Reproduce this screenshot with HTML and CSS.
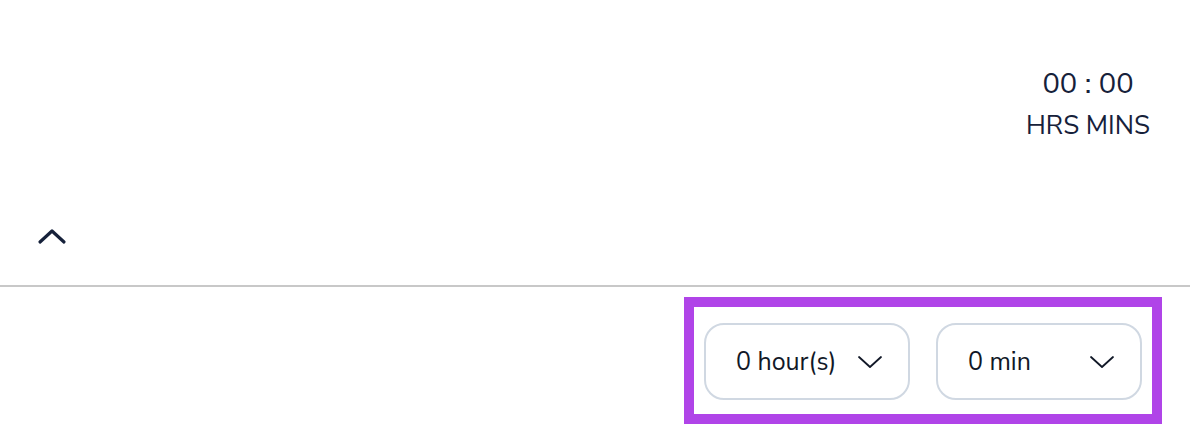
FILE: index.html
```html
<!DOCTYPE html>
<html lang="en">
<head>
    <meta charset="UTF-8">
    <meta name="viewport" content="width=device-width, initial-scale=1.0">
    <link rel="stylesheet" href="styles.css">
</head>
<body>
    <div class="panel">
        <div class="summary">
            <div class="timer">
                <div class="timer-value" id="timerValue">00 : 00</div>
                <div class="timer-label">HRS MINS</div>
            </div>
            <button class="collapse" aria-label="Collapse">
                <svg width="30" height="18" viewBox="0 0 30 18">
                    <path d="M3 15 L15 4 L27 15" fill="none" stroke="#16213a" stroke-width="3.2" stroke-linecap="round" stroke-linejoin="round"/>
                </svg>
            </button>
        </div>
        <div class="details">
            <div class="pickers">
                <div class="picker picker-hours">
                    <span id="hoursText">0 hour(s)</span>
                    <svg class="caret" width="26" height="16" viewBox="0 0 26 16">
                        <path d="M2 3 L13 13 L24 3" fill="none" stroke="#111827" stroke-width="1.8" stroke-linecap="round" stroke-linejoin="round"/>
                    </svg>
                </div>
                <div class="picker picker-mins">
                    <span id="minsText">0 min</span>
                    <svg class="caret" width="26" height="16" viewBox="0 0 26 16">
                        <path d="M2 3 L13 13 L24 3" fill="none" stroke="#111827" stroke-width="1.8" stroke-linecap="round" stroke-linejoin="round"/>
                    </svg>
                </div>
            </div>
        </div>
    </div>
</body>
</html>
```

FILE: styles.css
```css
body {
    margin: 0;
    font-family: "Nunito Sans", "Open Sans", sans-serif;
    color: #16213a;
    background: #fff;
}

.panel {
    width: 1190px;
}

.summary {
    height: 285px;
    display: flex;
    flex-direction: column;
    justify-content: space-between;
}

.timer {
    align-self: flex-end;
    margin-top: 67px;
    margin-right: 40px;
    text-align: center;
}

.timer-value {
    font-size: 29px;
    line-height: 34px;
}

.timer-label {
    font-size: 26px;
    line-height: 30px;
    margin-top: 10px;
}

.collapse {
    align-self: flex-start;
    margin: 0 0 40px 37px;
    padding: 0;
    border: none;
    background: none;
    cursor: pointer;
    display: flex;
}

.details {
    border-top: 2px solid #c8c8c8;
    display: flex;
    justify-content: flex-end;
    padding: 10px 28px 0 0;
}

.pickers {
    display: flex;
    gap: 26px;
    padding: 16px 10px 14px 10px;
    border: 10px solid #b044e8;
}

.picker {
    box-sizing: border-box;
    width: 206px;
    height: 77px;
    border: 2px solid #d0d8e2;
    border-radius: 20px;
    display: flex;
    align-items: center;
    justify-content: space-between;
    padding: 0 25px 0 30px;
    font-size: 25px;
    color: #111827;
}

.caret {
    flex: none;
}
```
